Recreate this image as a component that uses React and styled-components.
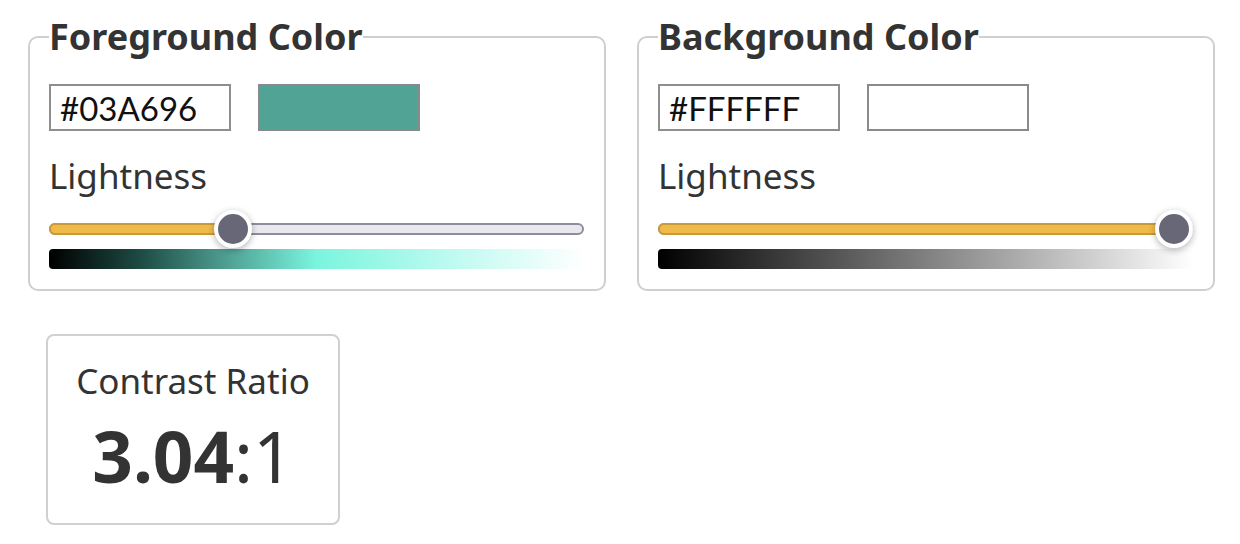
import React from 'react';
import styled, { createGlobalStyle } from 'styled-components';

const GlobalStyle = createGlobalStyle`
  body {
    margin: 0;
    background: #fff;
    color: #333;
    font-family: "Noto Sans", "Open Sans", sans-serif;
  }
`;

const pickers = [
  {
    title: 'Foreground Color',
    hex: '#03A696',
    swatch: '#51a396',
    lightness: 0.332,
    gradient:
      'linear-gradient(to right, #000 0%, #1d4b43 17%, #51a396 34%, #7af5de 50%, #bdfaf0 75%, #fff 100%)',
  },
  {
    title: 'Background Color',
    hex: '#FFFFFF',
    swatch: '#fff',
    lightness: 1,
    gradient: 'linear-gradient(to right, #000 0%, #808080 50%, #fff 100%)',
  },
];

const ColorPicker = ({ title, hex, swatch, lightness, gradient }) => {
  return (
    <Fieldset>
      <Legend>{title}</Legend>
      <InputRow>
        <HexInput type="text" defaultValue={hex} />
        <Swatch $color={swatch} />
      </InputRow>
      <Label>Lightness</Label>
      <SliderBox>
        <Track>
          <Fill style={{ width: `calc(21px + (100% - 38px) * ${lightness})` }} />
        </Track>
        <Thumb style={{ left: `calc((100% - 38px) * ${lightness})` }} />
      </SliderBox>
      <GradientBar $gradient={gradient} />
    </Fieldset>
  );
};

const App = () => {
  return (
    <Page>
      <GlobalStyle />
      <Pickers>
        {pickers.map((picker) => (
          <ColorPicker key={picker.title} {...picker} />
        ))}
      </Pickers>
      <RatioCard>
        <RatioTitle>Contrast Ratio</RatioTitle>
        <RatioValue>
          <strong>3.04</strong>:1
        </RatioValue>
      </RatioCard>
    </Page>
  );
};

const Page = styled.main`
  padding: 16px 25px 0 28px;
`;

const Pickers = styled.div`
  display: flex;
  gap: 31px;
`;

const Fieldset = styled.fieldset`
  width: 578px;
  box-sizing: border-box;
  margin: 0;
  padding: 26px 20px 20px 19px;
  border: 2px solid #cfcfcf;
  border-radius: 10px;
`;

const Legend = styled.legend`
  padding: 0;
  font-size: 36px;
  font-weight: 700;
  line-height: 42px;
  color: #333;
`;

const InputRow = styled.div`
  display: flex;
  gap: 27px;
`;

const HexInput = styled.input`
  width: 182px;
  height: 47px;
  box-sizing: border-box;
  margin: 0;
  padding: 0 9px;
  border: 2px solid #8e8e8e;
  font-family: Lato, "Noto Sans", sans-serif;
  font-size: 33px;
  color: #111;
  outline: none;
`;

const Swatch = styled.div`
  width: 162px;
  height: 47px;
  box-sizing: border-box;
  border: 2px solid #8a8a8a;
  background: ${(p) => p.$color};
`;

const Label = styled.div`
  margin-top: 21px;
  font-size: 35px;
  line-height: 48px;
  color: #333;
`;

const SliderBox = styled.div`
  position: relative;
  height: 38px;
  margin-top: 10px;
  display: flex;
  align-items: center;
`;

const Track = styled.div`
  position: relative;
  width: 100%;
  height: 12px;
  box-sizing: border-box;
  border: 2px solid #8f8c9c;
  border-radius: 6px;
  background: #e9e8ee;
`;

const Fill = styled.div`
  position: absolute;
  top: -2px;
  bottom: -2px;
  left: -2px;
  box-sizing: border-box;
  border: 2px solid #c99a38;
  border-radius: 6px;
  background: #efba4a;
`;

const Thumb = styled.div`
  position: absolute;
  top: 0;
  width: 38px;
  height: 38px;
  box-sizing: border-box;
  border: 4px solid #fff;
  border-radius: 50%;
  background: #686777;
  box-shadow: 0 2px 7px rgba(0, 0, 0, 0.3);
`;

const GradientBar = styled.div`
  height: 20px;
  margin-top: 1px;
  border-radius: 4px 0 0 4px;
  background: ${(p) => p.$gradient};
`;

const RatioCard = styled.section`
  width: 294px;
  height: 191px;
  box-sizing: border-box;
  margin: 43px 0 0 18px;
  padding-top: 21px;
  border: 2px solid #d0d0d0;
  border-radius: 8px;
  text-align: center;
`;

const RatioTitle = styled.div`
  font-size: 35px;
  line-height: 48px;
  color: #333;
`;

const RatioValue = styled.div`
  margin-top: 8px;
  font-size: 71px;
  line-height: 86px;
  font-weight: 400;
  color: #333;
  strong {
    font-weight: 700;
  }
`;

export default App;
